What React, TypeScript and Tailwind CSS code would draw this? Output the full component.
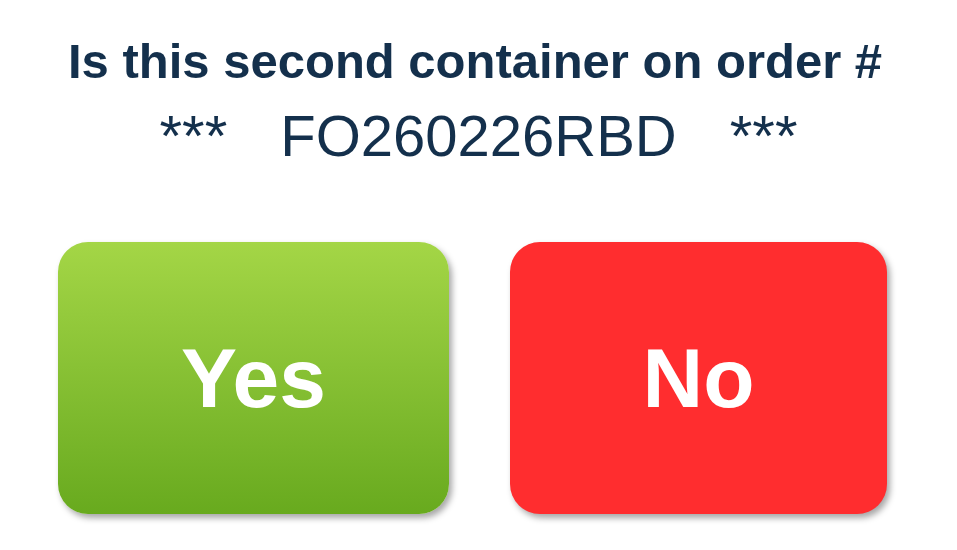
export default function App() {
  return (
    <div className="w-[957px] h-[550px] bg-white font-['Liberation_Sans',Arial,sans-serif] text-[#14304c] overflow-hidden">
      <h1 className="pt-[33px] pl-[68px] text-[49px] leading-[56px] font-bold whitespace-nowrap">
        Is this second container on order #
      </h1>
      <div className="mt-[15px] flex justify-center gap-[53px] text-[58px] leading-[64px] whitespace-nowrap">
        <span>***</span>
        <span>FO260226RBD</span>
        <span>***</span>
      </div>
      <div className="mt-[74px] flex pl-[58px] gap-[61px]">
        <button className="w-[391px] h-[272px] rounded-[30px] bg-gradient-to-b from-[#a4d646] to-[#68aa1e] shadow-[3px_4px_6px_rgba(0,0,0,0.35)] flex items-center justify-center text-white text-[84px] font-bold">
          Yes
        </button>
        <button className="w-[377px] h-[272px] rounded-[30px] bg-[#ff2d2f] shadow-[3px_4px_6px_rgba(0,0,0,0.35)] flex items-center justify-center text-white text-[84px] font-bold">
          No
        </button>
      </div>
    </div>
  );
}
